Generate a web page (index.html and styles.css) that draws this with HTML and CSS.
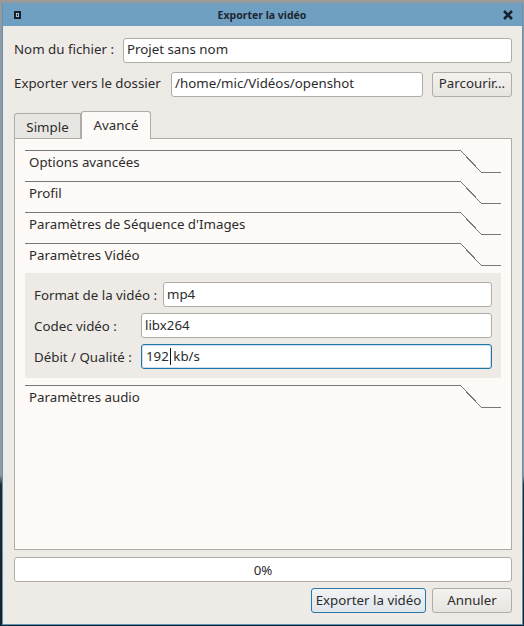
FILE: index.html
```html
<!DOCTYPE html>
<html>
<head>
  <meta charset="utf-8">
  <title>Exporter la vidéo</title>
  <link rel="stylesheet" href="styles.css">
</head>
<body>
  <div class="window">
    <div class="titlebar">
      <svg class="app-icon" width="7" height="8" viewBox="0 0 7 8">
        <rect width="7" height="8" fill="#15202b"/>
        <rect x="2" y="2" width="3" height="4" fill="#a9c3d6"/>
        <rect x="3" y="3" width="1" height="2" fill="#15202b"/>
      </svg>
      <div class="title">Exporter la vidéo</div>
      <svg class="close-icon" width="10" height="10" viewBox="0 0 10 10">
        <path d="M1 1L9 9M9 1L1 9" stroke="#15202b" stroke-width="2.5" fill="none"/>
      </svg>
    </div>

    <div class="content">
      <div class="row">
        <label class="label label-name">Nom du fichier :</label>
        <div class="field">Projet sans nom</div>
      </div>
      <div class="row row-folder">
        <label class="label label-folder">Exporter vers le dossier</label>
        <div class="field">/home/mic/Vidéos/openshot</div>
        <div class="btn btn-browse">Parcourir...</div>
      </div>

      <div class="tabs">
        <div class="tab">Simple</div>
        <div class="tab tab-active">Avancé</div>
      </div>

      <div class="tab-panel">
        <div class="section">
          <span class="section-title">Options avancées</span>
          <svg class="section-line" viewBox="0 0 476 23"><path d="M0 .5H435.5L456.5 22.5H476"/></svg>
        </div>
        <div class="section">
          <span class="section-title">Profil</span>
          <svg class="section-line" viewBox="0 0 476 23"><path d="M0 .5H435.5L456.5 22.5H476"/></svg>
        </div>
        <div class="section">
          <span class="section-title">Paramètres de Séquence d'Images</span>
          <svg class="section-line" viewBox="0 0 476 23"><path d="M0 .5H435.5L456.5 22.5H476"/></svg>
        </div>
        <div class="section">
          <span class="section-title">Paramètres Vidéo</span>
          <svg class="section-line" viewBox="0 0 476 23"><path d="M0 .5H435.5L456.5 22.5H476"/></svg>
        </div>

        <div class="video-box">
          <div class="video-row">
            <label class="label label-format">Format de la vidéo :</label>
            <div class="field">mp4</div>
          </div>
          <div class="video-row">
            <label class="label label-codec">Codec vidéo :</label>
            <div class="field">libx264</div>
          </div>
          <div class="video-row">
            <label class="label label-codec">Débit / Qualité :</label>
            <div class="field field-focus">192<span class="caret"></span> kb/s</div>
          </div>
        </div>

        <div class="section section-audio">
          <span class="section-title">Paramètres audio</span>
          <svg class="section-line" viewBox="0 0 476 23"><path d="M0 .5H435.5L456.5 22.5H476"/></svg>
        </div>
      </div>

      <div class="progress">0%</div>

      <div class="actions">
        <div class="btn btn-default">Exporter la vidéo</div>
        <div class="btn btn-cancel">Annuler</div>
      </div>
    </div>
  </div>
</body>
</html>
```

FILE: styles.css
```css
* {
  margin: 0;
  padding: 0;
  box-sizing: border-box;
}

body {
  width: 524px;
  height: 626px;
  overflow: hidden;
  background: linear-gradient(#9a9a9a 0, #8f9aa2 30px, #8f9aa2 475px, #1c2a33 485px, #16222b 100%);
  font-family: "Noto Sans", "Open Sans", sans-serif;
  font-size: 13.3px;
  color: #2c2c2c;
}

.window {
  margin: 3px 0 0 2px;
  width: 521px;
  height: 622px;
  background: #eeebe7;
  border: 1px solid #5f93b8;
  border-top: 0;
  display: flex;
  flex-direction: column;
}

.titlebar {
  height: 23px;
  flex-shrink: 0;
  background: #6f9fc1;
  display: flex;
  align-items: center;
  padding: 0 9px 0 11px;
}

.title {
  flex: 1;
  text-align: center;
  font-size: 10.5px;
  font-weight: 700;
  color: #1d2731;
}

.content {
  flex: 1;
  padding: 11px 10px 0 11px;
  display: flex;
  flex-direction: column;
}

.row {
  display: flex;
  align-items: center;
  height: 26px;
}

.row-folder {
  margin-top: 8px;
}

.label {
  white-space: nowrap;
  flex-shrink: 0;
}

.row .label {
  line-height: 22px;
  padding-bottom: 2px;
}

.label-name {
  width: 109px;
}

.label-folder {
  width: 157px;
}

.label-format {
  width: 129px;
}

.label-codec {
  width: 107px;
}

.field {
  flex: 1;
  height: 25px;
  line-height: 23px;
  background: #fff;
  border: 1px solid #b0ada8;
  border-radius: 3px;
  padding: 0 3px;
  white-space: nowrap;
}

.btn {
  height: 25px;
  line-height: 23px;
  text-align: center;
  border: 1px solid #b0ada8;
  border-radius: 3px;
  background: linear-gradient(#f4f2ef, #e8e5e1);
}

.row .field,
.row .btn {
  line-height: 21px;
}

.btn-browse {
  width: 80px;
  margin-left: 9px;
}

.tabs {
  display: flex;
  align-items: flex-end;
  margin-top: 13px;
  height: 28px;
}

.tab {
  width: 67px;
  height: 25px;
  line-height: 27px;
  text-align: center;
  background: #e8e6e3;
  border: 1px solid #b0ada8;
  border-bottom: 0;
  border-radius: 3px 0 0 0;
}

.tab-active {
  width: 70px;
  height: 28px;
  line-height: 26px;
  margin-bottom: -1px;
  background: #fdfaf7;
  border-radius: 3px 3px 0 0;
  position: relative;
  z-index: 1;
}

.tab-panel {
  height: 412px;
  background: #fdfaf7;
  border: 1px solid #b0ada8;
  padding: 11px 10px 0 10px;
}

.section {
  height: 31px;
  position: relative;
  padding-left: 4px;
  line-height: 24px;
}

.section-line {
  position: absolute;
  left: 0;
  top: 0;
  width: 476px;
  height: 23px;
  fill: none;
  stroke: #7a7876;
  stroke-width: 1;
  shape-rendering: crispEdges;
}

.video-box {
  width: 476px;
  height: 105px;
  margin-top: -1px;
  background: #eeebe7;
  padding: 9px 9px 0 9px;
  display: flex;
  flex-direction: column;
  gap: 6px;
}

.video-row {
  display: flex;
  align-items: center;
  height: 25px;
}

.section-audio {
  margin-top: 7px;
}

.field-focus {
  border-color: #1f76a8;
  box-shadow: inset 0 0 0 1px #cfdfec;
  padding-left: 4px;
  word-spacing: -1px;
}

.caret {
  display: inline-block;
  width: 1px;
  height: 17px;
  margin-left: 1px;
  background: #111;
  vertical-align: -4px;
}

.progress {
  height: 25px;
  line-height: 24px;
  margin-top: 7px;
  background: #fff;
  border: 1px solid #b0ada8;
  border-radius: 3px;
  text-align: center;
}

.actions {
  display: flex;
  justify-content: flex-end;
  gap: 6px;
  margin-top: 6px;
}

.btn-default {
  width: 115px;
  border-color: #2a76a5;
  background: linear-gradient(#f2f3f4, #dfe6ec);
}

.btn-cancel {
  width: 80px;
}
```
